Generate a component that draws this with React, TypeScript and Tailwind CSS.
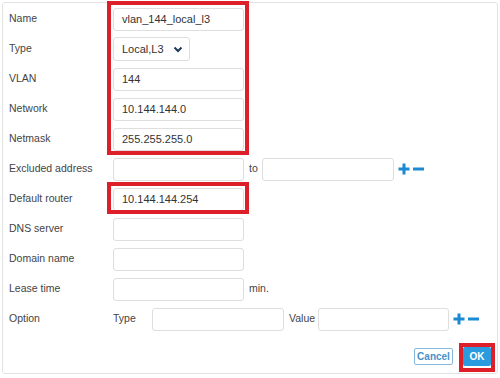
import React from 'react';

const Plus = () => (
  <svg width="12" height="12" viewBox="0 0 12 12">
    <path d="M6 0.5v11M0.5 6h11" stroke="#1b8ad3" strokeWidth="3" />
  </svg>
);

const Minus = () => (
  <svg width="11" height="12" viewBox="0 0 11 12">
    <path d="M0 6h11" stroke="#1b8ad3" strokeWidth="3" />
  </svg>
);

const Chevron = () => (
  <svg width="10" height="7" viewBox="0 0 10 7">
    <path d="M1.5 1.5L5 5l3.5-3.5" fill="none" stroke="#1e3a5a" strokeWidth="2" />
  </svg>
);

const Field: React.FC<{ value?: string; className?: string }> = ({ value = '', className = 'w-[131px]' }) => (
  <div className={`h-[23px] border border-[#dedede] rounded-[3px] bg-white flex items-center pl-[8px] text-[#333] text-[11px] ${className}`}>
    {value}
  </div>
);

const Row: React.FC<{ label: string; children: React.ReactNode }> = ({ label, children }) => (
  <div className="flex items-center h-[30px]">
    <div className="w-[104px] shrink-0 text-[#444]">{label}</div>
    {children}
  </div>
);

const PlusMinus = () => (
  <div className="flex items-center gap-[3px] ml-[4px]">
    <Plus />
    <Minus />
  </div>
);

export default function App() {
  return (
    <div className="relative w-[500px] h-[378px] bg-white overflow-hidden" style={{ fontFamily: '"Liberation Sans", Arial, sans-serif' }}>
      <div className="ml-[2px] mt-[2px] w-[496px] h-[372px] border border-[#e2e2e2] rounded-[3px] pl-[6px] pr-[6px] pt-[1px] text-[10.5px]">
        <Row label="Name"><Field value="vlan_144_local_l3" /></Row>
        <Row label="Type">
          <div className="h-[24px] w-[77px] border border-[#dedede] rounded-[3px] flex items-center pl-[8px] gap-[9px] text-[#333] text-[11px]">
            Local,L3
            <Chevron />
          </div>
        </Row>
        <Row label="VLAN"><Field value="144" /></Row>
        <Row label="Network"><Field value="10.144.144.0" /></Row>
        <Row label="Netmask"><Field value="255.255.255.0" /></Row>
        <Row label="Excluded address">
          <Field />
          <span className="w-[18px] pl-[5px] text-[#444]">to</span>
          <Field className="w-[132px]" />
          <PlusMinus />
        </Row>
        <Row label="Default router"><Field value="10.144.144.254" /></Row>
        <Row label="DNS server"><Field /></Row>
        <Row label="Domain name"><Field /></Row>
        <Row label="Lease time">
          <Field />
          <span className="pl-[5px] text-[#444]">min.</span>
        </Row>
        <Row label="Option">
          <span className="w-[39px] text-[#444]">Type</span>
          <Field className="w-[132px]" />
          <span className="w-[34px] pl-[5px] text-[#444]">Value</span>
          <Field className="w-[131px]" />
          <PlusMinus />
        </Row>
        <div className="flex justify-end items-center gap-[10px] mt-[13px]">
          <button className="h-[17px] w-[39px] border border-[#86b8dc] rounded-[2px] bg-white text-[#4a90c8] font-bold text-[10px] leading-none">
            Cancel
          </button>
          <button className="h-[19px] w-[28px] rounded-[2px] bg-[#2b9be0] text-white font-bold text-[10px] leading-none">
            OK
          </button>
        </div>
      </div>
      <div className="absolute left-[107px] top-[1px] w-[142px] h-[154px] border-4 border-[#dd1f2a] pointer-events-none" />
      <div className="absolute left-[107px] top-[182px] w-[142px] h-[32px] border-4 border-[#dd1f2a] pointer-events-none" />
      <div className="absolute left-[459px] top-[343px] w-[36px] h-[29px] border-4 border-[#dd1f2a] pointer-events-none" />
    </div>
  );
}
